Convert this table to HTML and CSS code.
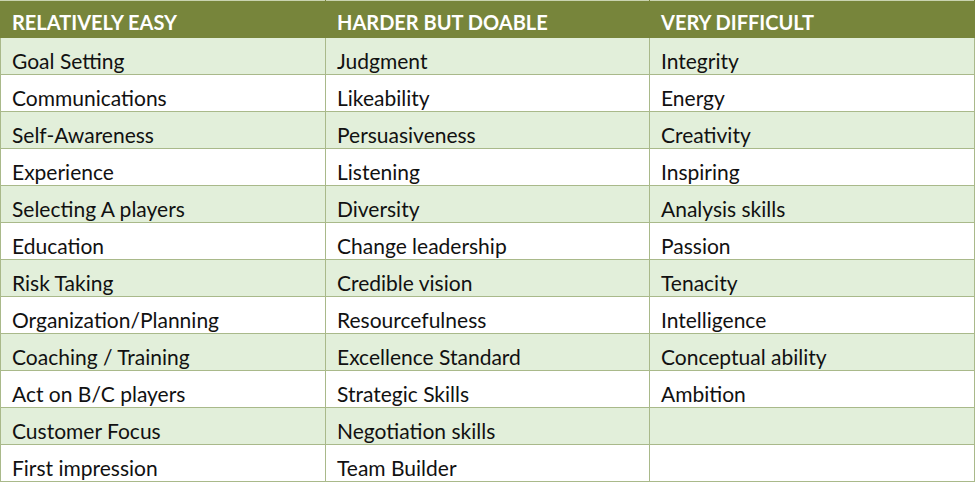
FILE: index.html
```html
<!DOCTYPE html>
<html>
<head>
<meta charset="utf-8">
<link rel="stylesheet" href="styles.css">
</head>
<body>
<table class="grid">
  <thead>
    <tr><th>RELATIVELY EASY</th><th>HARDER BUT DOABLE</th><th>VERY DIFFICULT</th></tr>
  </thead>
  <tbody>
    <tr><td>Goal Setting</td><td>Judgment</td><td>Integrity</td></tr>
    <tr><td>Communications</td><td>Likeability</td><td>Energy</td></tr>
    <tr><td>Self-Awareness</td><td>Persuasiveness</td><td>Creativity</td></tr>
    <tr><td>Experience</td><td>Listening</td><td>Inspiring</td></tr>
    <tr><td>Selecting A players</td><td>Diversity</td><td>Analysis skills</td></tr>
    <tr><td>Education</td><td>Change leadership</td><td>Passion</td></tr>
    <tr><td>Risk Taking</td><td>Credible vision</td><td>Tenacity</td></tr>
    <tr><td>Organization/Planning</td><td>Resourcefulness</td><td>Intelligence</td></tr>
    <tr><td>Coaching / Training</td><td>Excellence Standard</td><td>Conceptual ability</td></tr>
    <tr><td>Act on B/C players</td><td>Strategic Skills</td><td>Ambition</td></tr>
    <tr><td>Customer Focus</td><td>Negotiation skills</td><td></td></tr>
    <tr><td>First impression</td><td>Team Builder</td><td></td></tr>
  </tbody>
</table>
</body>
</html>
```

FILE: styles.css
```css
html, body {
  margin: 0;
  padding: 0;
  background: #ffffff;
}
.grid {
  border-collapse: collapse;
  width: 975px;
  table-layout: fixed;
  font-family: Lato, "Liberation Sans", sans-serif;
  font-size: 21px;
  color: #111111;
}
.grid th, .grid td {
  height: 37px;
  padding: 0 0 1px 11px;
  border: 1px solid #a9b98a;
  text-align: left;
  vertical-align: bottom;
  box-sizing: border-box;
  white-space: nowrap;
  line-height: 24px;
}
.grid th:first-child, .grid td:first-child { width: 325px; }
.grid th:nth-child(2), .grid td:nth-child(2) { width: 324px; }
.grid th {
  background: #77853b;
  color: #ffffff;
  font-size: 20px;
  font-weight: 700;
  padding-bottom: 3px;
  border-color: #77853b;
  border-top-color: #c9d3b0;
}
.grid tbody tr:nth-child(odd) td { background: #e2efda; }
.grid tbody tr:nth-child(even) td { background: #ffffff; }
```
